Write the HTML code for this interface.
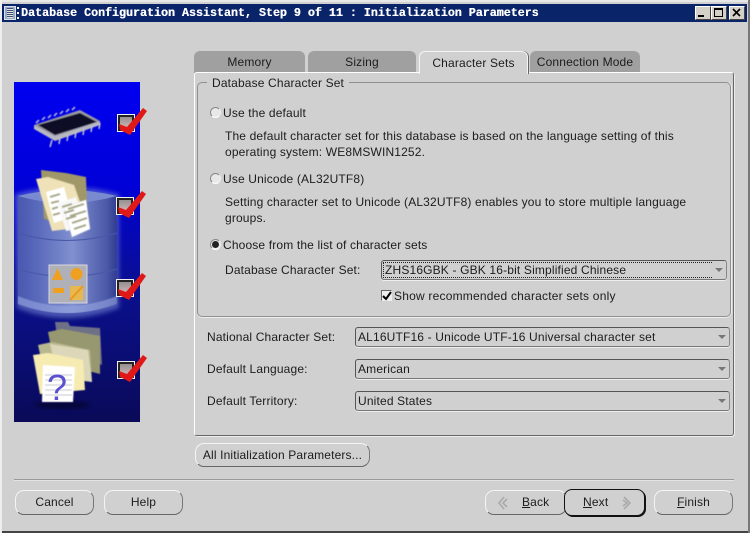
<!DOCTYPE html>
<html><head><meta charset="utf-8">
<style>
html,body{margin:0;padding:0;background:#d0d0d0}
#p{position:relative;width:750px;height:533px;overflow:hidden;background:#d0d0d0;font-family:"Liberation Sans",sans-serif;font-size:12px;color:#1c1c1c}
#p div,#p svg{position:absolute}
.t{white-space:nowrap;letter-spacing:.15px;line-height:14px}
.tab{background:#a0a0a0;border-radius:6px 6px 0 0;height:22px;top:51px;text-align:center;line-height:23px;white-space:nowrap;letter-spacing:.16px}
.rad{width:11px;height:11px;border-radius:50%;background:#e8e8e8;border:1px solid;border-color:#888 #eee #fff #888;box-sizing:border-box}
.sel{height:20px;box-sizing:border-box;border:1px solid #555;border-right-color:#888;border-bottom-color:#777;border-radius:3px;box-shadow:0 1px 0 #eee}
.sel .v{left:2px;top:2px;white-space:nowrap;letter-spacing:.16px;line-height:14px}
.arr{width:0;height:0;border:4px solid transparent;border-top:4px solid #777;border-bottom:0;top:7px;right:3px}
.btn{height:25px;box-sizing:border-box;border:1px solid;border-color:#f4f4f4 #777 #666 #f4f4f4;border-radius:9px;text-align:center;line-height:23px;white-space:nowrap;letter-spacing:.14px}
</style></head><body>
<div id="p">
<div style="left:0;top:0;width:750px;height:2px;background:#e8e8e8"></div>
<div style="left:0;top:531px;width:750px;height:2px;background:#444"></div>
<div style="left:748px;top:0;width:2px;height:533px;background:#777"></div>
<div style="left:0;top:0;width:2px;height:533px;background:#eee"></div>

<!-- title bar -->
<div style="left:2px;top:4px;width:745px;height:18px;background:#0a246a"></div>
<div style="left:4px;top:6px;width:12px;height:14px;background:#9aa8c8;border:1px solid #d8e0e8;box-sizing:border-box"></div>
<div style="left:7px;top:8px;width:6px;height:10px;background:repeating-linear-gradient(#40507a 0 1px,#dfe6d8 1px 2px)"></div>
<div style="left:17px;top:7px;width:2px;height:2px;background:#fff"></div>
<div style="left:17px;top:12px;width:2px;height:2px;background:#fff"></div>
<div style="left:17px;top:17px;width:2px;height:2px;background:#fff"></div>
<div style="left:21px;top:6px;color:#fff;font:bold 11.67px/14px 'Liberation Mono',monospace;text-shadow:.3px 0 0 #fff;white-space:nowrap">Database Configuration Assistant, Step 9 of 11 : Initialization Parameters</div>

<div style="left:695px;top:6px;width:16px;height:14px;background:#d4d0c8;border:1px solid;border-color:#fff #444 #444 #fff;box-sizing:border-box"></div>
<div style="left:698px;top:15px;width:6px;height:2px;background:#000"></div>
<div style="left:711px;top:6px;width:16px;height:14px;background:#d4d0c8;border:1px solid;border-color:#fff #444 #444 #fff;box-sizing:border-box"></div>
<div style="left:714px;top:8px;width:9px;height:9px;border:1px solid #000;border-top-width:2px;box-sizing:border-box"></div>
<div style="left:729px;top:6px;width:16px;height:14px;background:#d4d0c8;border:1px solid;border-color:#fff #444 #444 #fff;box-sizing:border-box"></div>
<svg style="left:732px;top:8px" width="10" height="10"><path d="M1 1L8 8M8 1L1 8" stroke="#000" stroke-width="1.6"/></svg>

<!-- left graphic -->
<svg style="left:14px;top:82px" width="127" height="340" viewBox="0 0 127 340">
<defs>
<linearGradient id="bg" x1="0" y1="0" x2="0" y2="1"><stop offset="0" stop-color="#0000f0"/><stop offset=".3" stop-color="#0000d8"/><stop offset=".6" stop-color="#0a1090"/><stop offset="1" stop-color="#0a0a58"/></linearGradient>
<linearGradient id="cyl" x1="0" y1="0" x2="1" y2="0"><stop offset="0" stop-color="#4a58b0"/><stop offset=".15" stop-color="#5565b8"/><stop offset=".55" stop-color="#8090d0"/><stop offset=".9" stop-color="#4a58a8"/><stop offset="1" stop-color="#303c90"/></linearGradient>
<linearGradient id="chk" x1="0" y1="0" x2="0" y2="1"><stop offset="0" stop-color="#888"/><stop offset="1" stop-color="#e0c0c0"/></linearGradient>
<filter id="b1"><feGaussianBlur stdDeviation="2.5"/></filter>
<filter id="b2"><feGaussianBlur stdDeviation=".5"/></filter>
</defs>
<rect width="126" height="340" fill="url(#bg)"/>
<!-- cylinder -->
<path d="M1 112Q52 98 105 112V226Q52 246 3 226Z" fill="#8090d8" opacity=".55" filter="url(#b1)"/>
<path d="M4 114Q52 102 103 114V222Q52 240 4 222Z" fill="url(#cyl)"/>
<path d="M4 114Q52 102 103 114Q52 128 4 114Z" fill="#7a8ad0"/>
<path d="M4 151Q52 166 103 151M4 187Q52 202 103 187" stroke="#4a58a8" fill="none"/>
<path d="M4 214Q52 234 103 214V222Q52 240 4 222Z" fill="#98a6e0" opacity=".6" filter="url(#b2)"/>
<!-- chip -->
<g filter="url(#b2)">
<path d="M20 43L66 28L86 39L41 54Z" fill="#9a9aa2"/>
<path d="M24 43L66 31L83 40L41 53Z" fill="#0a0a28"/>
<path d="M20 43L41 54L86 39V43L41 59L20 47Z" fill="#b8b8c0"/>
<path d="M22 41L25 38M28 38L31 35M34 36L37 33M40 34L43 31M46 32L49 29M52 30L55 27M58 28L61 25" stroke="#c0c0d0" stroke-width="1.5"/>
<path d="M38 58L36 65M46 56L45 62M54 53L53 59M62 50L61 56M70 47L69 53M78 44L77 50M86 41L85 47" stroke="#c0c0d0" stroke-width="1.5"/>
</g>
<!-- folder + docs -->
<g filter="url(#b2)" transform="translate(0,77)">
<path d="M27 11L52 14L72 18L74 70L30 60Z" fill="#a09868"/>
<path d="M22 20L34 18L60 26L72 60L70 68L38 72Z" fill="#efe2b8"/>
<path d="M32 33L50 28L58 58L40 64Z" fill="#fff"/>
<path d="M44 44L62 38L72 68L52 72Z" fill="#f8f8f8"/>
<path d="M50 48L72 41L76 70L58 78Z" fill="#fff" stroke="#ddd" stroke-width=".5"/>
<path d="M36 38L46 35M37 44L45 42M38 50L44 48M39 56L46 54M48 48L58 45M50 54L60 51M52 60L62 57M54 50L70 45M56 57L72 52M58 64L73 59M60 70L72 66" stroke="#a8a888" stroke-width="2"/>
</g>
<!-- shapes box -->
<rect x="35" y="183" width="38" height="38" fill="#b0b0b8" stroke="#d8d8e0"/>
<path d="M38 198L43.5 186L49 198Z" fill="#f0a020"/>
<circle cx="62.5" cy="192" r="6" fill="#f0a020"/>
<rect x="39" y="206" width="11" height="5" fill="#f0a020"/>
<rect x="56" y="204" width="13" height="14" fill="#e8b850"/>
<path d="M56 218L69 204" stroke="#e89820" stroke-width="2"/>
<!-- folders bottom -->
<ellipse cx="48" cy="323" rx="28" ry="4" fill="#000" opacity=".4" filter="url(#b1)"/>
<g filter="url(#b2)">
<path d="M41 240L54 240L56 244L86 246L88 283L44 262Z" fill="#6e7088"/>
<path d="M34 250L48 247L86 254L86 292L40 280Z" fill="#989870"/>
<path d="M24 263L38 260L76 268L78 300L30 290Z" fill="#b8b890"/>
<path d="M36 262L74 268L78 300L44 296Z" fill="#e0dcc0" opacity=".85"/>
<path d="M19 273L34 271L69 278L71 308L26 312Z" fill="#f6ebb0"/>
<path d="M29 283L61 285L59 320L28 320Z" fill="#fff"/>
<path d="M31 293H58M31 298H58M31 303H58M31 308H58M31 313H58" stroke="#c0c0cc"/>
</g>
<text x="33" y="318" font-family="Liberation Sans,sans-serif" font-size="36" fill="#5a50d0">?</text>
</svg>
<!-- checks -->
<svg style="left:110px;top:104px" width="42" height="280" viewBox="0 0 42 280">
<g><rect x="7.5" y="10.5" width="17" height="17" fill="url(#chk)" stroke="#f0f0f0"/><rect x="9" y="12" width="14" height="14" fill="none" stroke="#222" stroke-width="2"/><path d="M9 20L17 23L33 4L37 7L20 31L10 26Z" fill="#e01818"/></g>
<g transform="translate(-1,83)"><rect x="7.5" y="10.5" width="17" height="17" fill="url(#chk)" stroke="#f0f0f0"/><rect x="9" y="12" width="14" height="14" fill="none" stroke="#222" stroke-width="2"/><path d="M9 20L17 23L33 4L37 7L20 31L10 26Z" fill="#e01818"/></g>
<g transform="translate(-1,165)"><rect x="7.5" y="10.5" width="17" height="17" fill="url(#chk)" stroke="#f0f0f0"/><rect x="9" y="12" width="14" height="14" fill="none" stroke="#222" stroke-width="2"/><path d="M9 20L17 23L33 4L37 7L20 31L10 26Z" fill="#e01818"/></g>
<g transform="translate(0,247)"><rect x="7.5" y="10.5" width="17" height="17" fill="url(#chk)" stroke="#f0f0f0"/><rect x="9" y="12" width="14" height="14" fill="none" stroke="#222" stroke-width="2"/><path d="M9 20L17 23L33 4L37 7L20 31L10 26Z" fill="#e01818"/></g>
</svg>

<!-- tabs -->
<div class="tab" style="left:194px;width:111px">Memory</div>
<div class="tab" style="left:308px;width:108px">Sizing</div>
<div class="tab" style="left:530px;width:110px">Connection Mode</div>
<!-- tab panel -->
<div style="left:194px;top:72px;width:540px;height:364px;box-sizing:border-box;border:1px solid;border-color:#fff #666 #666 #fff;border-radius:3px;box-shadow:1px 1px 0 #eee"></div>
<div style="left:419px;top:51px;width:109px;height:23px;background:#d0d0d0;border:1px solid #f4f4f4;border-bottom:0;border-radius:6px 6px 0 0;box-sizing:border-box;box-shadow:1px 0 0 #666;text-align:center;line-height:22px;letter-spacing:.16px;white-space:nowrap">Character Sets</div>

<!-- group -->
<div style="left:197px;top:82px;width:534px;height:235px;box-sizing:border-box;border:1px solid #909090;border-radius:5px;box-shadow:0 1px 0 #eee,1px 0 0 #eee"></div>
<div class="t" style="left:207px;top:76px;padding:0 5px;background:#d0d0d0">Database Character Set</div>

<div class="rad" style="left:210px;top:107px"></div>
<div class="t" style="left:223px;top:106px">Use the default</div>
<div class="t" style="left:225px;top:129px">The default character set for this database is based on the language setting of this</div>
<div class="t" style="left:225px;top:145px">operating system: WE8MSWIN1252.</div>
<div class="rad" style="left:210px;top:173px"></div>
<div class="t" style="left:223px;top:172px">Use Unicode (AL32UTF8)</div>
<div class="t" style="left:225px;top:195px">Setting character set to Unicode (AL32UTF8) enables you to store multiple language</div>
<div class="t" style="left:225px;top:211px">groups.</div>
<div class="rad" style="left:210px;top:239px"></div>
<div style="left:212px;top:241px;width:7px;height:7px;border-radius:50%;background:#222"></div>
<div class="t" style="left:223px;top:238px">Choose from the list of character sets</div>
<div class="t" style="left:225px;top:263px">Database Character Set:</div>
<div class="sel" style="left:381px;top:260px;width:346px">
<div style="left:1px;top:1px;width:329px;height:16px;border:1px dotted #222;border-right:0;box-sizing:border-box"></div>
<div class="v" style="left:3px">ZHS16GBK - GBK 16-bit Simplified Chinese</div><div class="arr"></div></div>
<div style="left:381px;top:290px;width:11px;height:11px;background:#eee;border:1px solid;border-color:#666 #eee #eee #666;box-sizing:border-box"></div>
<svg style="left:382px;top:291px" width="10" height="10"><path d="M1 5L4 8L9 1" fill="none" stroke="#000" stroke-width="2"/></svg>
<div class="t" style="left:394px;top:289px;letter-spacing:.21px">Show recommended character sets only</div>

<div class="t" style="left:207px;top:330px">National Character Set:</div>
<div class="sel" style="left:355px;top:327px;width:375px"><div class="v">AL16UTF16 - Unicode UTF-16 Universal character set</div><div class="arr"></div></div>
<div class="t" style="left:207px;top:362px">Default Language:</div>
<div class="sel" style="left:355px;top:359px;width:375px"><div class="v">American</div><div class="arr"></div></div>
<div class="t" style="left:207px;top:394px">Default Territory:</div>
<div class="sel" style="left:355px;top:391px;width:375px"><div class="v">United States</div><div class="arr"></div></div>

<div class="btn" style="left:195px;top:443px;width:175px;height:24px;line-height:22px">All Initialization Parameters...</div>

<div style="left:14px;top:479px;width:720px;height:1px;background:#999"></div>
<div style="left:14px;top:480px;width:720px;height:1px;background:#e4e4e4"></div>

<div class="btn" style="left:15px;top:490px;width:79px">Cancel</div>
<div class="btn" style="left:104px;top:490px;width:79px">Help</div>
<div class="btn" style="left:485px;top:490px;width:82px;text-align:left;padding-left:36px"><u>B</u>ack</div>
<div style="left:564px;top:489px;width:81px;height:27px;box-sizing:border-box;border:1px solid #111;border-radius:8px;box-shadow:1px 1px 0 #111;background:#d0d0d0;line-height:25px;padding-left:18px;letter-spacing:.16px"><u>N</u>ext</div>
<svg style="left:496px;top:496px" width="14" height="14"><path d="M8 1L3 7L8 13M11 3L7 7L11 11" fill="none" stroke="#aaa" stroke-width="1.6"/></svg>
<svg style="left:621px;top:496px" width="14" height="14"><path d="M3 1L9 7L3 13M2 4L6 7L2 10" fill="none" stroke="#aaa" stroke-width="1.6"/></svg>
<div class="btn" style="left:654px;top:490px;width:79px"><u>F</u>inish</div>
</div>
</body></html>
